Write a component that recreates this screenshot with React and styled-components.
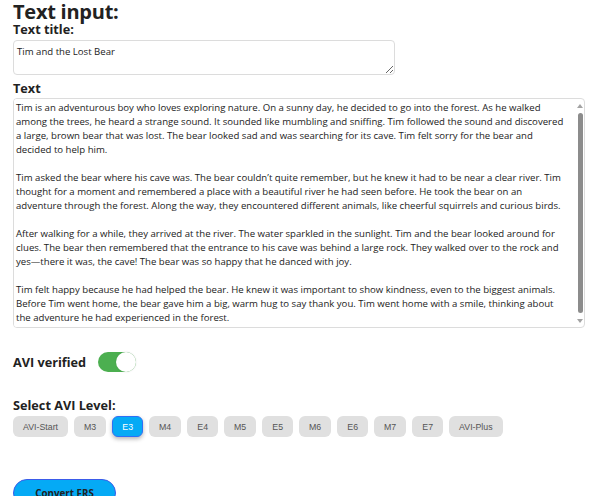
import React, { useState } from 'react';
import styled, { createGlobalStyle } from 'styled-components';

const GlobalStyle = createGlobalStyle`
  body {
    margin: 0;
    background: #fff;
    font-family: "Open Sans", "Noto Sans", sans-serif;
    color: #222;
  }
`;

const Page = styled.div`
  padding: 2px 13px 0;
  width: 580px;
`;

const Heading = styled.h1`
  font-size: 20px;
  line-height: 20px;
  letter-spacing: -0.25px;
  font-weight: 700;
  margin: 0;
  color: #222;
`;

const Label = styled.div`
  font-size: 12.7px;
  line-height: 15px;
  font-weight: 700;
  color: #222;
  margin-top: ${(p) => p.$top || 0}px;
`;

const Field = styled.textarea`
  display: block;
  box-sizing: border-box;
  font-family: "Open Sans", sans-serif;
  font-size: 9.6px;
  line-height: 14px;
  color: #222;
  outline: none;
  background: #fff;
`;

const TitleField = styled(Field)`
  width: 382px;
  height: 35px;
  margin-top: 3px;
  padding: 4px 3px 3px;
  border: 1px solid #dcdcdc;
  border-radius: 4px;
`;

const StoryBox = styled.div`
  display: flex;
  box-sizing: border-box;
  width: 572px;
  height: 230px;
  margin-top: 2px;
  border: 1px solid #dcdcdc;
  border-radius: 4px;
  overflow: hidden;
`;

const StoryField = styled(Field)`
  flex: 1;
  min-width: 0;
  height: 100%;
  border: none;
  padding: 2px;
  resize: none;
  overflow-y: auto;
  scrollbar-width: none;
`;

const ScrollBar = styled.div`
  width: 14px;
  box-sizing: border-box;
  padding: 5px 0 4px 6px;
  display: flex;
  flex-direction: column;
  align-items: center;
  gap: 5px;
`;

const Arrow = styled.div`
  width: 0;
  height: 0;
  border-left: 3px solid transparent;
  border-right: 3px solid transparent;
  ${(p) => (p.$down ? 'border-top: 4px solid #a3a3a3;' : 'border-bottom: 4px solid #a3a3a3;')}
`;

const Thumb = styled.div`
  flex: 1;
  width: 5px;
  margin-bottom: 1px;
  border-radius: 3px;
  background: #8c8c8c;
`;

const ToggleRow = styled.div`
  display: flex;
  align-items: center;
  gap: 12px;
  margin-top: 24px;
`;

const Switch = styled.button`
  position: relative;
  width: 38px;
  height: 20px;
  border: none;
  padding: 0;
  border-radius: 10px;
  background: ${(p) => (p.$on ? '#4caf50' : '#ccc')};
  cursor: pointer;

  &::after {
    content: '';
    position: absolute;
    top: 0;
    left: ${(p) => (p.$on ? '18px' : '0')};
    width: 20px;
    height: 20px;
    border-radius: 50%;
    background: #fff;
    box-shadow: 0 0 2px rgba(0, 0, 0, 0.12);
  }
`;

const LevelRow = styled.div`
  display: flex;
  gap: 6px;
  margin-top: 3px;
`;

const LevelButton = styled.button`
  font-family: "Liberation Sans", Arial, sans-serif;
  font-size: 8.8px;
  height: 21px;
  padding: 0 9px;
  border-radius: 6px;
  border: 1px solid ${(p) => (p.$active ? '#2f6ff5' : 'transparent')};
  background: ${(p) => (p.$active ? '#05aaf5' : '#e0e0e0')};
  color: ${(p) => (p.$active ? '#fff' : '#555')};
  box-shadow: ${(p) => (p.$active ? '0 2px 4px rgba(0, 0, 0, 0.3)' : 'none')};
  cursor: pointer;
`;

const ConvertButton = styled.button`
  display: block;
  margin-top: 42px;
  width: 103px;
  height: 28px;
  border-radius: 14px;
  border: 1px solid #3b5bea;
  background: #05aaf5;
  font-family: "Open Sans", sans-serif;
  font-size: 9.8px;
  font-weight: 700;
  color: #222;
  padding: 0;
  cursor: pointer;
`;

const story = `Tim is an adventurous boy who loves exploring nature. On a sunny day, he decided to go into the forest. As he walked among the trees, he heard a strange sound. It sounded like mumbling and sniffing. Tim followed the sound and discovered a large, brown bear that was lost. The bear looked sad and was searching for its cave. Tim felt sorry for the bear and decided to help him.

Tim asked the bear where his cave was. The bear couldn’t quite remember, but he knew it had to be near a clear river. Tim thought for a moment and remembered a place with a beautiful river he had seen before. He took the bear on an adventure through the forest. Along the way, they encountered different animals, like cheerful squirrels and curious birds.

After walking for a while, they arrived at the river. The water sparkled in the sunlight. Tim and the bear looked around for clues. The bear then remembered that the entrance to his cave was behind a large rock. They walked over to the rock and yes—there it was, the cave! The bear was so happy that he danced with joy.

Tim felt happy because he had helped the bear. He knew it was important to show kindness, even to the biggest animals. Before Tim went home, the bear gave him a big, warm hug to say thank you. Tim went home with a smile, thinking about the adventure he had experienced in the forest.`;

const levels = ['AVI-Start', 'M3', 'E3', 'M4', 'E4', 'M5', 'E5', 'M6', 'E6', 'M7', 'E7', 'AVI-Plus'];

export default function App() {
  const [title, setTitle] = useState('Tim and the Lost Bear');
  const [text, setText] = useState(story);
  const [verified, setVerified] = useState(true);
  const [level, setLevel] = useState('E3');

  return (
    <Page>
      <GlobalStyle />
      <Heading>Text input:</Heading>
      <Label>Text title:</Label>
      <TitleField value={title} onChange={(e) => setTitle(e.target.value)} />
      <Label $top={6}>Text</Label>
      <StoryBox>
        <StoryField value={text} onChange={(e) => setText(e.target.value)} />
        <ScrollBar>
          <Arrow />
          <Thumb />
          <Arrow $down />
        </ScrollBar>
      </StoryBox>
      <ToggleRow>
        <Label as="span">AVI verified</Label>
        <Switch $on={verified} onClick={() => setVerified(!verified)} aria-label="AVI verified" />
      </ToggleRow>
      <Label $top={26}>Select AVI Level:</Label>
      <LevelRow>
        {levels.map((l) => (
          <LevelButton key={l} $active={l === level} onClick={() => setLevel(l)}>
            {l}
          </LevelButton>
        ))}
      </LevelRow>
      <ConvertButton>Convert FRS</ConvertButton>
    </Page>
  );
}
